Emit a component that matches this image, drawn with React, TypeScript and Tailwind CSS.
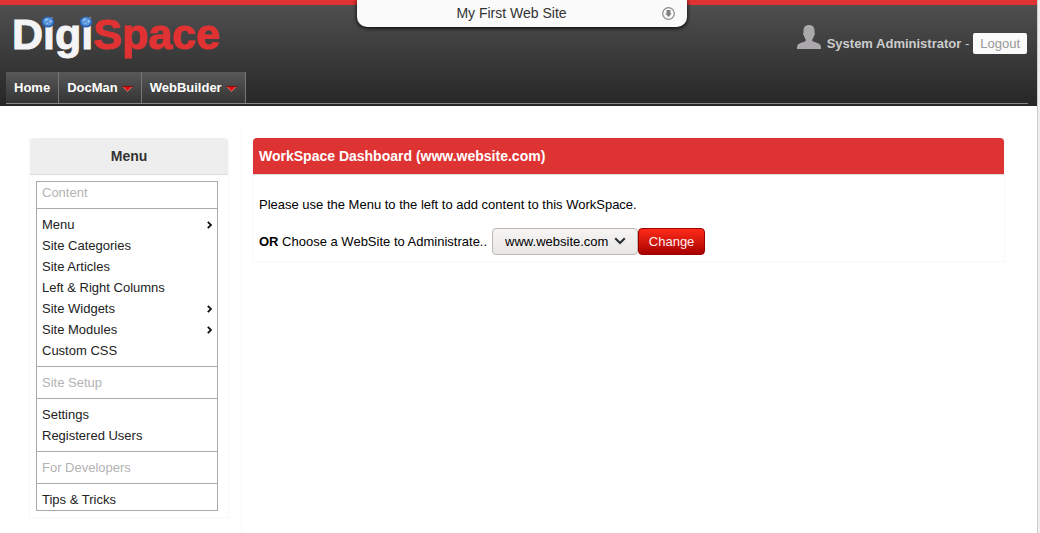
import { useState } from "react"

interface IMenuItem {
    label: string
    hasChildren?: boolean
}

interface IMenuGroup {
    title: string
    items: IMenuItem[]
}

const menuGroups: IMenuGroup[] = [
    {
        title: "Content",
        items: [
            { label: "Menu", hasChildren: true },
            { label: "Site Categories" },
            { label: "Site Articles" },
            { label: "Left & Right Columns" },
            { label: "Site Widgets", hasChildren: true },
            { label: "Site Modules", hasChildren: true },
            { label: "Custom CSS" },
        ],
    },
    {
        title: "Site Setup",
        items: [{ label: "Settings" }, { label: "Registered Users" }],
    },
    {
        title: "For Developers",
        items: [{ label: "Tips & Tricks" }],
    },
]

const navItems: IMenuItem[] = [
    { label: "Home" },
    { label: "DocMan", hasChildren: true },
    { label: "WebBuilder", hasChildren: true },
]

const Globe = ({ cx }: { cx: number }) => (
    <g>
        <ellipse cx={cx} cy="13" rx="6.4" ry="5.6" fill="#2c62ae" />
        <ellipse cx={cx} cy="12.6" rx="4.8" ry="4" fill="#5b97dc" />
        <path d={`M${cx - 3.5} 11.5l1.5-2 2 .4-1 1.6zM${cx + 1} 12.5l1.8-1.6 1 1-.8 1.8zM${cx - 2} 14.5l1.6-.5 1 1.2z`} fill="#a9cdf2" />
    </g>
)

const Logo = () => (
    <svg width="216" height="54" viewBox="0 0 216 54" role="img" aria-label="DigiSpace">
        <text x="2" y="40" fontFamily="Liberation Sans, Arial, sans-serif" fontWeight="700" fontSize="43" strokeWidth="1">
            <tspan fill="#f4f4f6" stroke="#f4f4f6">Digi</tspan>
            <tspan fill="#e03232" stroke="#e03232">Space</tspan>
        </text>
        <Globe cx={38} />
        <Globe cx={76} />
    </svg>
)

const NavArrow = () => (
    <svg width="11" height="6" viewBox="0 0 11 6" aria-hidden="true" className="mt-[2px]">
        <path d="M0.5 0.5h10L5.500 5.5z" fill="#d81414" />
        <path d="M0.5 0.5L5.500 5.500 10.500 0.5" fill="none" stroke="#e88a7a" strokeWidth="0.7" />
        <path d="M0 0.5h11" stroke="#8e0d0d" />
    </svg>
)

const SiteTab = () => (
    <div className="absolute top-0 left-1/2 -ml-[163px] flex h-[27px] w-[330px] items-center rounded-b-[10px] bg-[#fafafa] pr-3 pl-4 text-[14px] text-[#333] shadow-[0_1px_4px_#000]">
        <span className="flex-1 pr-3 text-center">My First Web Site</span>
        <button type="button" aria-label="Show site panel">
            <svg width="13" height="13" viewBox="0 0 13 13" className="block">
                <circle cx="6.5" cy="6.5" r="5.8" fill="none" stroke="#8a8a8a" strokeWidth="1.2" />
                <path d="M4.5 3h4v3.5h1.2L6.5 10 3.3 6.500h1.2z" fill="#808080" />
            </svg>
        </button>
    </div>
)

const Header = () => (
    <header className="border-t-[5px] border-[#e03232] bg-linear-to-b from-[#4f4f4f] to-[#272727] pr-[9px] pb-[2px] pl-[6px]">
        <div className="flex h-[67px] items-start justify-between">
            <a href="#" className="block pt-1 pl-1">
                <Logo />
            </a>
            <div className="flex items-start pt-5 pr-px text-[#ccc]">
                <svg width="24" height="24" viewBox="0 0 24 24" aria-hidden="true">
                    <path
                        d="M12 0C15.500 0 17.500 2.200 17.500 5.500V7.500C18.200 8 18 10 17 10.800C16.600 12.600 16 13.600 15.300 14.500V16C17 17.200 21 17.600 23 19.400C24 20.500 24 22 24 24H0C0 22 0 20.500 1 19.400C3 17.600 7 17.200 8.700 16V14.500C8 13.600 7.400 12.600 7 10.800C6 10 5.800 8 6.500 7.500V5.500C6.500 2.200 8.500 0 12 0Z"
                        fill="#aaa8aa"
                    />
                </svg>
                <div className="flex items-center gap-1 pt-2 pl-[6px]">
                    <span>
                        <b>System Administrator</b> -
                    </span>
                    <button type="button" className="h-[21px] rounded-[2px] bg-[#fafafa] px-[7px] text-[#999]">
                        Logout
                    </button>
                </div>
            </div>
        </div>
        <nav className="border-b border-[#888]">
            <ul className="flex">
                {navItems.map((item) => (
                    <li key={item.label} className="border-r border-[#777] bg-linear-to-b from-[#595959] to-[#343434]">
                        <a href="#" className="flex h-[31px] items-center gap-1 px-2 font-bold text-white">
                            {item.label}
                            {item.hasChildren && <NavArrow />}
                        </a>
                    </li>
                ))}
            </ul>
        </nav>
    </header>
)

const SideMenu = () => (
    <aside className="w-[200px] shrink-0 self-start border border-t-0 border-[#f8f8f8]">
        <h2 className="h-[37px] rounded-t-[4px] border-b border-[#ddd] bg-[#eee] text-center text-[14px] leading-[37px] font-bold text-[#333]">Menu</h2>
        <div className="m-[6px] w-[182px] border border-[#aaa]">
            {menuGroups.map((group) => (
                <section key={group.title} className="group border-b border-[#aaa] last:border-b-0">
                    <h3 className="border-b border-[#aaa] px-[5px] py-[5px] text-[#b3b3b3] group-first:pt-0">{group.title}</h3>
                    <ul className="py-[5px] group-last:pb-0">
                        {group.items.map((item) => (
                            <li key={item.label}>
                                <a href="#" className="flex items-center justify-between px-[5px] text-[#222]">
                                    {item.label}
                                    {item.hasChildren && (
                                        <svg width="5" height="8" viewBox="0 0 5 8" aria-hidden="true">
                                            <path d="M0.8 0.8L4 4 0.8 7.2" fill="none" stroke="#111" strokeWidth="1.8" />
                                        </svg>
                                    )}
                                </a>
                            </li>
                        ))}
                    </ul>
                </section>
            ))}
        </div>
    </aside>
)

const Dashboard = () => {
    const [site, setSite] = useState("www.website.com")
    return (
        <section className="border border-t-0 border-[#f8f8f8]">
            <h1 className="h-[37px] rounded-t-[4px] border-b border-[#ddd] bg-[#de3333] px-[6px] text-[14px] leading-[37px] font-bold text-white">
                WorkSpace Dashboard (www.website.com)
            </h1>
            <div className="px-[6px] pt-[19px] pb-[6px] text-black">
                <p>Please use the Menu to the left to add content to this WorkSpace.</p>
                <form className="mt-[13px] flex items-center" onSubmit={(e) => e.preventDefault()}>
                    <label htmlFor="site" className="pr-[5px]">
                        <b>OR</b> Choose a WebSite to Administrate..
                    </label>
                    <div className="relative">
                        <select
                            id="site"
                            value={site}
                            onChange={(e) => setSite(e.target.value)}
                            className="block h-[27px] w-[146px] appearance-none rounded-[4px] border border-[#bfb8b1] bg-linear-to-b from-[#f6f5f4] to-[#e9e7e5] pl-3"
                        >
                            <option>www.website.com</option>
                        </select>
                        <svg width="12" height="8" viewBox="0 0 12 8" className="pointer-events-none absolute top-[9px] right-3" aria-hidden="true">
                            <path d="M1.2 1.2L6 6 10.8 1.2" fill="none" stroke="#2e3436" strokeWidth="2.2" />
                        </svg>
                    </div>
                    <button type="submit" className="h-[27px] w-[67px] rounded-[4px] border border-[#900] bg-linear-to-b from-[#ff2a1a] to-[#a80000] text-center text-[#fee]">
                        Change
                    </button>
                </form>
            </div>
        </section>
    )
}

const App = () => {
    return (
        <div className="relative flex min-h-screen bg-white font-['Liberation_Sans',Arial,sans-serif] text-[13px] leading-[21px]">
            <div className="flex min-w-0 flex-1 flex-col">
                <Header />
                <div className="flex flex-1 pt-[22px] pl-[29px]">
                    <div className="pt-[10px]">
                        <SideMenu />
                    </div>
                    <main className="ml-3 min-w-0 flex-1 border-l border-[#f8f8f8] pt-[10px] pr-8 pl-[10px]">
                        <Dashboard />
                    </main>
                </div>
            </div>
            <div className="w-[3px] border-l border-[#ccc] bg-[#f0eeec]" />
            <SiteTab />
        </div>
    )
}

export default App
